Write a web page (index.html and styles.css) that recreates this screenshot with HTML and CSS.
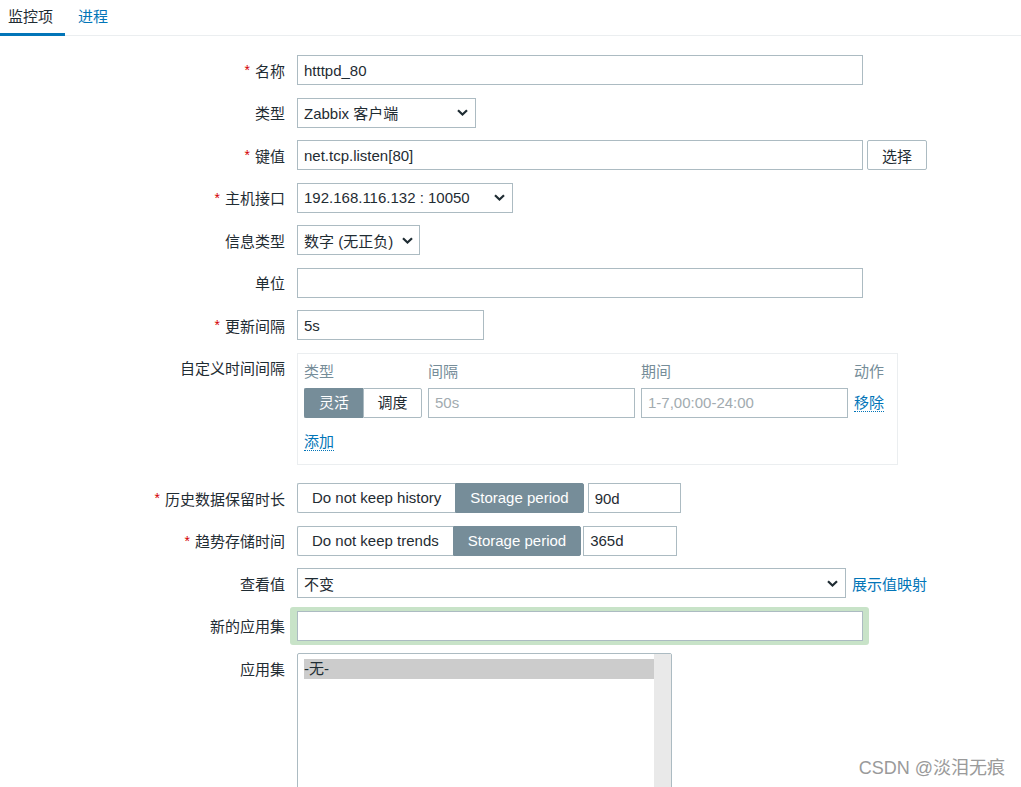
FILE: index.html
```html
<!DOCTYPE html>
<html lang="zh-CN">
<head>
<meta charset="utf-8">
<title>监控项</title>
<link rel="stylesheet" href="styles.css">
</head>
<body>
<div class="tabs">
  <div class="tab active">监控项</div>
  <div class="tab link">进程</div>
</div>

<div class="form">
  <div class="label"><span class="req">*</span>名称</div>
  <div class="field"><input class="input w-full" value="htttpd_80"></div>

  <div class="label">类型</div>
  <div class="field"><div class="select w-type"><span>Zabbix 客户端</span><svg class="chev" width="11" height="7" viewBox="0 0 11 7"><path d="M1 1.2 5.5 5.5 10 1.2" fill="none" stroke="#1f2c33" stroke-width="2.2"/></svg></div></div>

  <div class="label"><span class="req">*</span>键值</div>
  <div class="field"><input class="input w-full" value="net.tcp.listen[80]"><button class="btn">选择</button></div>

  <div class="label"><span class="req">*</span>主机接口</div>
  <div class="field"><div class="select w-iface"><span>192.168.116.132 : 10050</span><svg class="chev" width="11" height="7" viewBox="0 0 11 7"><path d="M1 1.2 5.5 5.5 10 1.2" fill="none" stroke="#1f2c33" stroke-width="2.2"/></svg></div></div>

  <div class="label">信息类型</div>
  <div class="field"><div class="select w-info"><span>数字 (无正负)</span><svg class="chev" width="11" height="7" viewBox="0 0 11 7"><path d="M1 1.2 5.5 5.5 10 1.2" fill="none" stroke="#1f2c33" stroke-width="2.2"/></svg></div></div>

  <div class="label">单位</div>
  <div class="field"><input class="input w-full" value=""></div>

  <div class="label"><span class="req">*</span>更新间隔</div>
  <div class="field"><input class="input w-delay" value="5s"></div>

  <div class="label top">自定义时间间隔</div>
  <div class="field box-cell">
    <div class="custom">
      <div class="cgrid">
        <div class="th">类型</div>
        <div class="th">间隔</div>
        <div class="th">期间</div>
        <div class="th">动作</div>
        <div class="seg small">
          <span class="seg-btn on">灵活</span><span class="seg-btn">调度</span>
        </div>
        <input class="input" placeholder="50s">
        <input class="input" placeholder="1-7,00:00-24:00">
        <div class="act"><span class="dlink">移除</span></div>
      </div>
      <div class="addrow"><span class="dlink">添加</span></div>
    </div>
  </div>

  <div class="label"><span class="req">*</span>历史数据保留时长</div>
  <div class="field">
    <div class="seg"><span class="seg-btn">Do not keep history</span><span class="seg-btn on">Storage period</span></div>
    <input class="input w-period" value="90d">
  </div>

  <div class="label"><span class="req">*</span>趋势存储时间</div>
  <div class="field">
    <div class="seg"><span class="seg-btn">Do not keep trends</span><span class="seg-btn on">Storage period</span></div>
    <input class="input w-period2" value="365d">
  </div>

  <div class="label">查看值</div>
  <div class="field"><div class="select w-value"><span>不变</span><svg class="chev" width="11" height="7" viewBox="0 0 11 7"><path d="M1 1.2 5.5 5.5 10 1.2" fill="none" stroke="#1f2c33" stroke-width="2.2"/></svg></div><a class="link map">展示值映射</a></div>

  <div class="label">新的应用集</div>
  <div class="field"><div class="highlight"><input class="input w-full" value=""></div></div>

  <div class="label top">应用集</div>
  <div class="field">
    <div class="listbox">
      <div class="options"><div class="opt sel">-无-</div></div>
      <div class="scroll"></div>
    </div>
  </div>
</div>

<div class="watermark">CSDN @淡泪无痕</div>
</body>
</html>
```

FILE: styles.css
```css
html, body {
  margin: 0;
  padding: 0;
  height: 100%;
  overflow: hidden;
  background: #ffffff;
}
body {
  font-family: "Liberation Sans", "Noto Sans CJK SC", Arial, sans-serif;
  font-size: 15px;
  color: #1f2c33;
  position: relative;
}

.tabs {
  display: flex;
  height: 35px;
  border-bottom: 1px solid #ebeef0;
}
.tab {
  height: 33px;
  line-height: 33px;
  padding: 0 12px 0 8px;
  border-bottom: 3px solid transparent;
  margin-bottom: -1px;
}
.tab + .tab { padding-left: 13px; }
.tab.active { border-bottom-color: #0275b8; }
.link { color: #0275b8; }

.form {
  display: grid;
  grid-template-columns: 285px 1fr;
  column-gap: 12px;
  row-gap: 12.5px;
  padding-top: 19px;
}
.label {
  height: 30px;
  display: flex;
  align-items: center;
  justify-content: flex-end;
  white-space: nowrap;
}
.label.top { align-self: start; }
.req {
  color: #d40000;
  margin-right: 5px;
  font-size: 14px;
}
.field {
  display: flex;
  align-items: center;
  min-height: 30px;
}

.input {
  box-sizing: border-box;
  height: 30px;
  border: 1px solid #acbbc2;
  background: #fff;
  padding: 0 6px;
  font: inherit;
  color: #1f2c33;
  outline: none;
  margin: 0;
}
.input::placeholder { color: #a2abb0; }
.w-full { width: 566px; }
.w-delay { width: 187px; }
.w-period { width: 93px; margin-left: 4px; }
.w-period2 { width: 94px; margin-left: 2px; }

.select {
  box-sizing: border-box;
  height: 30px;
  border: 1px solid #acbbc2;
  display: flex;
  align-items: center;
  justify-content: space-between;
  padding: 0 7px 0 6px;
  white-space: nowrap;
  background: #fff;
}
.chev { display: block; flex: none; margin-left: 8px; }
.w-type { width: 179px; }
.w-iface { width: 216px; }
.w-info { width: 123px; padding-right: 6px; }
.w-value { width: 549px; }
.map { margin-left: 6px; }

.btn {
  box-sizing: border-box;
  height: 30px;
  width: 60px;
  margin-left: 4px;
  border: 1px solid #acbbc2;
  border-radius: 2px;
  background: #fff;
  font: inherit;
  color: #1f2c33;
  padding: 0;
}

.box-cell { margin-bottom: 6px; }
.custom {
  box-sizing: border-box;
  width: 601px;
  border: 1px solid #ebeef0;
  padding: 6px 12px 10px 6px;
}
.cgrid {
  display: grid;
  grid-template-columns: 118px 207px 207px auto;
  column-gap: 6px;
  row-gap: 4px;
}
.th {
  height: 24px;
  line-height: 24px;
  color: #768d99;
}
.act {
  display: flex;
  align-items: center;
}
.dlink {
  color: #0275b8;
  border-bottom: 1px dotted #0275b8;
  line-height: 17px;
}
.addrow {
  height: 24px;
  display: flex;
  align-items: center;
  margin-top: 12px;
}

.seg {
  display: flex;
  height: 30px;
}
.seg-btn {
  box-sizing: border-box;
  height: 30px;
  line-height: 28px;
  padding: 0 14px;
  border: 1px solid #acbbc2;
  background: #fff;
  white-space: nowrap;
}
.seg-btn:first-child { border-radius: 2px 0 0 2px; border-right: none; }
.seg-btn:last-child { border-radius: 0 2px 2px 0; }
.seg-btn.on {
  background: #768d99;
  border-color: #768d99;
  color: #fff;
}
.seg.small .seg-btn {
  width: 59px;
  padding: 0;
  text-align: center;
}

.highlight {
  margin: -4px 0 -4px -7px;
  padding: 4px 6px 4px 7px;
  background: #c8e3c8;
  border-radius: 3px;
  display: flex;
}

.listbox {
  box-sizing: border-box;
  width: 375px;
  height: 160px;
  border: 1px solid #acbbc2;
  border-radius: 2px;
  display: flex;
  background: #fff;
}
.options {
  flex: 1;
  padding: 5px 0 0 6px;
}
.opt {
  height: 20px;
  line-height: 20px;
}
.opt.sel { background: #cccccc; }
.scroll {
  width: 17px;
  background: #e9e9e9;
}

.watermark {
  position: absolute;
  right: 16px;
  top: 756px;
  font-size: 18px;
  color: #9a9a9a;
  line-height: 24px;
  white-space: nowrap;
}
```
